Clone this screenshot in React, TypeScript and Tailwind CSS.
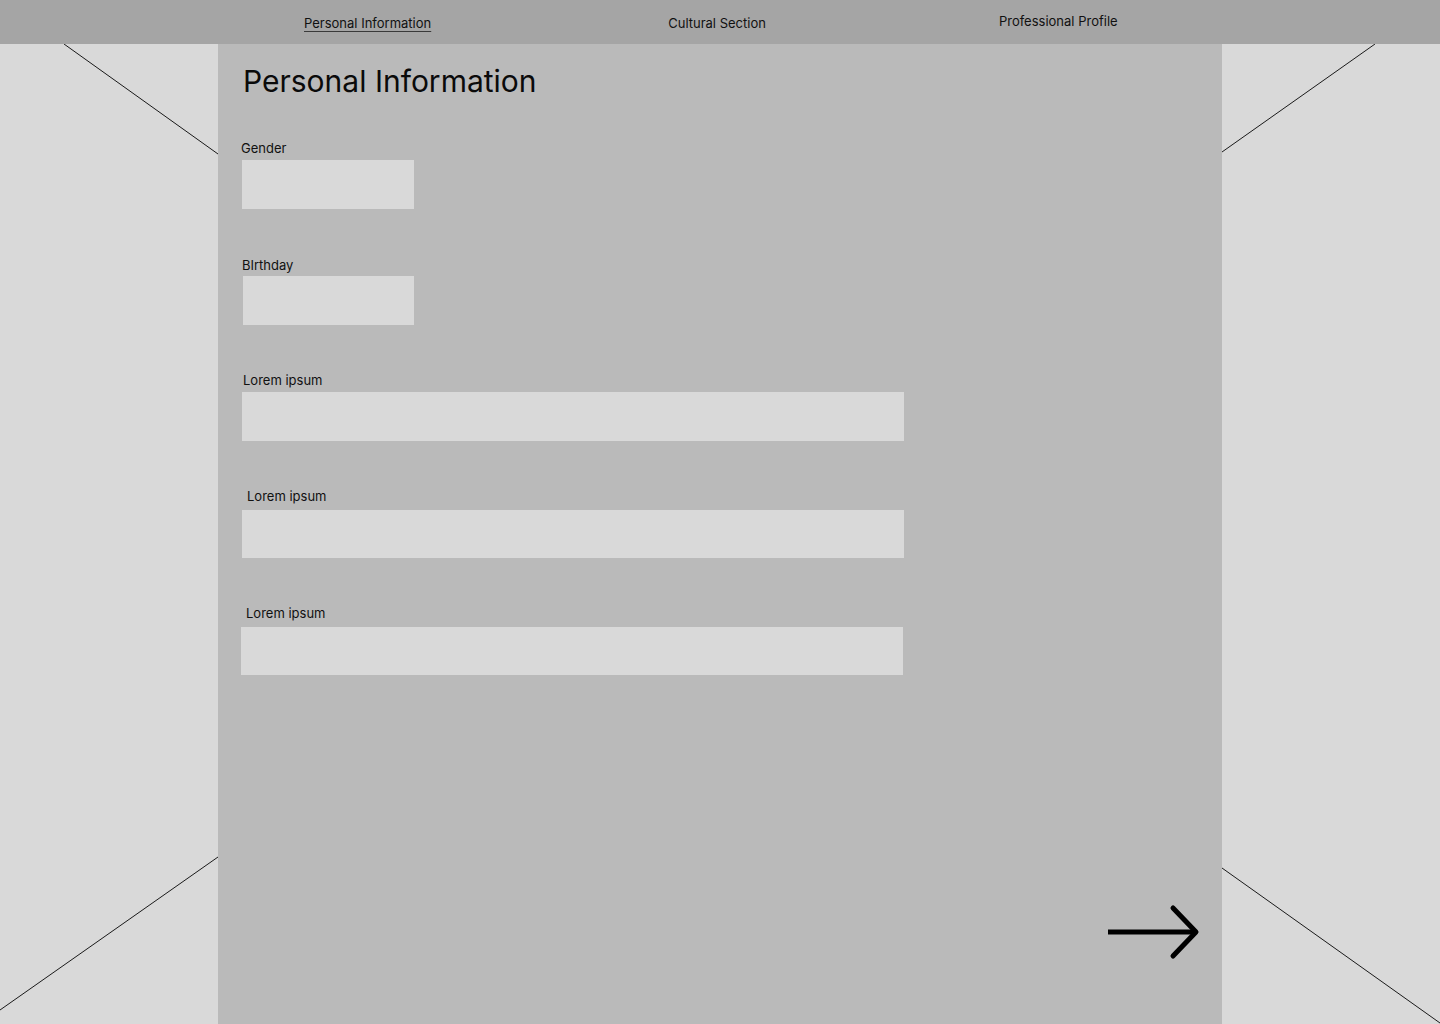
import React from "react";

const fields = [
  { label: "Gender", labelClass: "mt-[41px] ml-[23px]", boxClass: "mt-[4px] ml-[24px] w-[172px] h-[49px]" },
  { label: "BIrthday", labelClass: "mt-[48px] ml-[24px]", boxClass: "mt-[3px] ml-[25px] w-[171px] h-[49px]" },
  { label: "Lorem ipsum", labelClass: "mt-[47px] ml-[25px]", boxClass: "mt-[4px] ml-[24px] w-[662px] h-[49px]" },
  { label: "Lorem ipsum", labelClass: "mt-[47px] ml-[29px]", boxClass: "mt-[6px] ml-[24px] w-[662px] h-[48px]" },
  { label: "Lorem ipsum", labelClass: "mt-[47px] ml-[28px]", boxClass: "mt-[6px] ml-[23px] w-[662px] h-[48px]" },
];

function Backdrop() {
  // placeholder cross drawn behind the form panel
  return (
    <svg className="absolute inset-0 z-0" width="1440" height="1024" viewBox="0 0 1440 1024">
      <g stroke="#1a1a1a" strokeWidth="1">
        <line x1="64" y1="44" x2="218" y2="154" />
        <line x1="1375" y1="44" x2="1222" y2="152" />
        <line x1="218" y1="857" x2="0" y2="1010" />
        <line x1="1222" y1="868" x2="1440" y2="1023" />
      </g>
    </svg>
  );
}

function NextArrow() {
  return (
    <svg width="100" height="56" viewBox="0 0 100 56" fill="none">
      <line x1="6" y1="28" x2="94" y2="28" stroke="#000" strokeWidth="5" />
      <polyline
        points="71,4 94,28 71,52"
        stroke="#000"
        strokeWidth="5"
        strokeLinecap="round"
        strokeLinejoin="round"
      />
    </svg>
  );
}

export default function App() {
  return (
    <div className="relative w-[1440px] h-[1024px] overflow-hidden bg-[#d9d9d9] font-['Inter','Liberation_Sans',sans-serif] text-[#111]">
      <Backdrop />

      <div className="relative z-10 flex flex-col h-full">
        {/* Top tabs */}
        <header className="h-[44px] bg-[#a5a5a5] flex items-start pl-[304px] text-[13px] leading-[16px] shrink-0">
          <span className="mt-[15px] underline underline-offset-[3px] decoration-[#3a3a3a]">
            Personal Information
          </span>
          <span className="mt-[15px] ml-[237px]">Cultural Section</span>
          <span className="mt-[13px] ml-[233px]">Professional Profile</span>
        </header>

        {/* Form panel */}
        <main className="w-[1004px] mx-auto flex-1 bg-[#bababa] flex flex-col">
          <h1 className="mt-[19px] ml-[25px] text-[30px] leading-[36px] font-normal text-[#0a0a0a]">
            Personal Information
          </h1>

          {fields.map((f, i) => (
            <div key={i} className="flex flex-col items-start">
              <label className={`${f.labelClass} text-[13px] leading-[16px]`}>{f.label}</label>
              <div className={`${f.boxClass} bg-[#d9d9d9]`} />
            </div>
          ))}

          <div className="mt-auto self-end mr-[20px] mb-[64px]">
            <NextArrow />
          </div>
        </main>
      </div>
    </div>
  );
}
